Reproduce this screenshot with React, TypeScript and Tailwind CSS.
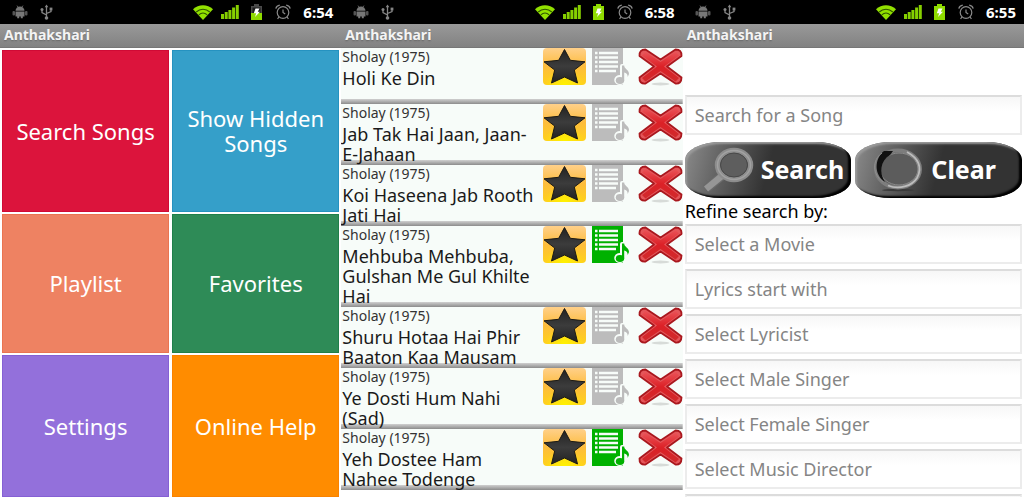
import { useState } from "react";
import type { ReactNode } from "react";

interface Song {
  id: number;
  movie: string;
  title: string;
  inPlaylist: boolean;
}

const tiles = [
  { label: "Search Songs", style: "bg-[#dc143c] border-[#d00a35] h-[162px]" },
  { label: "Show Hidden Songs", style: "bg-[#359fc9] border-[#2592c0] h-[162px]" },
  { label: "Playlist", style: "bg-[#ee8262] border-[#ea7450] h-[139px]" },
  { label: "Favorites", style: "bg-[#2e8b57] border-[#1f7f4a] h-[139px]" },
  { label: "Settings", style: "bg-[#9370db] border-[#8560d4] h-[142px]" },
  { label: "Online Help", style: "bg-[#ff8c00] border-[#fa8200] h-[142px]" },
];

const initialSongs: Song[] = [
  { id: 1, movie: "Sholay (1975)", title: "Holi Ke Din", inPlaylist: false },
  { id: 2, movie: "Sholay (1975)", title: "Jab Tak Hai Jaan, Jaan-E-Jahaan", inPlaylist: false },
  { id: 3, movie: "Sholay (1975)", title: "Koi Haseena Jab Rooth Jati Hai", inPlaylist: false },
  { id: 4, movie: "Sholay (1975)", title: "Mehbuba Mehbuba, Gulshan Me Gul Khilte Hai", inPlaylist: true },
  { id: 5, movie: "Sholay (1975)", title: "Shuru Hotaa Hai Phir Baaton Kaa Mausam", inPlaylist: false },
  { id: 6, movie: "Sholay (1975)", title: "Ye Dosti Hum Nahi (Sad)", inPlaylist: false },
  { id: 7, movie: "Sholay (1975)", title: "Yeh Dostee Ham Nahee Todenge", inPlaylist: true },
];

const filters = [
  "Select a Movie",
  "Lyrics start with",
  "Select Lyricist",
  "Select Male Singer",
  "Select Female Singer",
  "Select Music Director",
];

function AndroidIcon() {
  return (
    <svg width="16" height="14" viewBox="0 0 16 14" fill="#777">
      <path d="M3.500 5.800a4.500 4.300 0 0 1 9 0z" />
      <path d="M5 .6 6.200 2.400M11 .6 9.800 2.400" stroke="#777" strokeWidth=".8" />
      <path d="M3.500 6.500h9v5h-9z" />
      <rect x=".5" y="6" width="2.500" height="4.500" rx="1" fill="#555" />
      <rect x="13" y="6" width="2.500" height="4.500" rx="1" fill="#555" />
      <path d="M5.200 11h2v2.200h-2zM8.800 11h2v2.200h-2z" />
    </svg>
  );
}

function UsbIcon() {
  return (
    <svg width="13" height="16" viewBox="0 0 13 16" fill="#858585" stroke="#858585">
      <path d="M6.500 2v12M6.500 11 2 8.600V6M6.500 9.500 11 7.500V5" fill="none" strokeWidth="1.300" />
      <path d="m6.500 .5 1.800 2.700H4.700z" stroke="none" />
      <circle cx="6.500" cy="14" r="1.800" stroke="none" />
      <circle cx="2" cy="5.600" r="1.500" stroke="none" />
      <path d="M9.600 3.600h2.800v2.800H9.600z" stroke="none" />
    </svg>
  );
}

function WifiIcon() {
  return (
    <svg width="20" height="15" viewBox="0 0 20 15">
      <path d="M10 15 0 4.200C5.500-1 14.500-1 20 4.200z" fill="#92e000" />
      <path
        d="M3.200 7c4-3.600 9.600-3.600 13.600 0M5.800 9.800c2.500-2.200 5.900-2.200 8.400 0"
        fill="none"
        stroke="#2f5200"
        strokeWidth="1.100"
      />
    </svg>
  );
}

function SignalIcon() {
  return (
    <svg width="18" height="14" viewBox="0 0 18 14" fill="#86cf00">
      <path d="M0 9h3v5H0zM3.700 7h3v7h-3zM7.400 5h3v9h-3zM11.100 2.500h3V14h-3zM14.800 0h3v14h-3z" />
    </svg>
  );
}

function BatteryIcon({ low }: { low?: boolean }) {
  return (
    <svg width="13" height="16" viewBox="0 0 13 16">
      <path d="M4 0h5v2h3v14H1V2h3z" fill={low ? "#4a4a4a" : "#8fdb00"} />
      {low && <path d="M2.500 3.500h8V9h-8z" fill="#1d1d1d" />}
      {low && <path d="M1 9h11v7H1z" fill="#8fdb00" />}
      <path d="M5.500 4.500h4L7.800 7.800h2.200L5 13l1.200-3.800H3.800z" fill="#fff" />
    </svg>
  );
}

function AlarmIcon() {
  return (
    <svg width="16" height="16" viewBox="0 0 16 16" fill="none" stroke="#8a8a8a" strokeWidth="1.200">
      <circle cx="8" cy="8.500" r="5.800" />
      <path d="M8 5.500v3l2.200 1.600M.8 4.600C1.300 2.600 2.600 1.500 4.800 1.200M15.200 4.600c-.5-2-1.800-3.100-4-3.400M4 12.800 2.600 15M12 12.800l1.400 2.200" />
    </svg>
  );
}

function StarIcon() {
  return (
    <svg width="43" height="37" viewBox="0 0 43 37">
      <defs>
        <linearGradient id="gold" x1="0" y1="0" x2="0" y2="1">
          <stop offset="0" stopColor="#ffd08a" />
          <stop offset=".5" stopColor="#fdbc3c" />
          <stop offset="1" stopColor="#ffd21a" />
        </linearGradient>
        <radialGradient id="glow" cx=".5" cy="1" r=".45">
          <stop offset="0" stopColor="#fff200" />
          <stop offset="1" stopColor="#fff200" stopOpacity="0" />
        </radialGradient>
        <linearGradient id="coal" x1="0" y1="0" x2="0" y2="1">
          <stop offset="0" stopColor="#222" />
          <stop offset=".5" stopColor="#3c3c3c" />
          <stop offset="1" stopColor="#222" />
        </linearGradient>
      </defs>
      <rect width="43" height="37" rx="4" fill="url(#gold)" />
      <rect width="43" height="37" rx="4" fill="url(#glow)" />
      <path
        d="m21.500 1.500 5.800 10.800 14.700 1.500L31.300 22 34.500 35l-13-6L8.500 35l3.200-13L1 13.800l14.700-1.500z"
        fill="url(#coal)"
        stroke="#1c1a14"
        strokeWidth="1"
        strokeLinejoin="round"
      />
    </svg>
  );
}

function PlaylistIcon({ active }: { active: boolean }) {
  const color = active ? "#00b100" : "#bcbcbc";
  return (
    <svg width="38" height="37" viewBox="0 0 38 37">
      <path d="M0 0h31v37H0z" fill={color} />
      <path
        d="M3 5h2.500M3 9.500h2.500M3 14h2.500M3 18.500h2.500M3 23h2.500M7 5h19M7 9.500h19M7 14h19M7 18.500h19M7 23h17"
        stroke="#f7fcf9"
        strokeWidth="2.600"
      />
      <g fill="#f7fcf9" stroke="#f7fcf9" strokeWidth="4" strokeLinejoin="round">
        <ellipse cx="28" cy="32" rx="3.800" ry="3" />
        <path d="M30 32V18h2c0 3 5 4 5 8l-1.500 3c0-3-1.500-4-3.500-5v8z" />
      </g>
      <g fill={color}>
        <ellipse cx="28" cy="32.500" rx="4.200" ry="3.400" />
        <path d="M30 32V17.500h2.200c0 3.500 4.800 4 4.800 8.500l-1.300 3c0-3-1.500-4-3.500-4.500v8z" />
      </g>
    </svg>
  );
}

function DeleteIcon() {
  return (
    <svg width="45" height="38" viewBox="0 0 45 38">
      <defs>
        <linearGradient id="red" x1="0" y1="0" x2="0" y2="1">
          <stop offset="0" stopColor="#ea5257" />
          <stop offset=".5" stopColor="#dc2127" />
          <stop offset="1" stopColor="#d02a2c" />
        </linearGradient>
      </defs>
      <ellipse cx="22.500" cy="36" rx="9" ry="1.500" fill="#d7dbd8" />
      <path
        d="M7.500 1.500 22.500 11.500 37.500 1.500Q44 1.500 43.500 8L29 18.500l14.500 11Q43.500 36 37.500 35.500L22.500 25.500 7.500 35.500Q1 36 1.500 29.500L16 18.500 1.500 8Q1 1.500 7.500 1.500z"
        fill="#e4565a"
        stroke="#a9181e"
        strokeWidth="1.800"
        strokeLinejoin="round"
      />
      <path
        d="M7.500 4 22.500 14 37.500 4 41 7.500 26 18.500l15 11.500-3.500 3.500-15-10.500-15 10.500L4 30l15-11.500L4 7.500z"
        fill="url(#red)"
      />
    </svg>
  );
}

function MagnifierIcon() {
  return (
    <svg width="54" height="46" viewBox="0 0 54 46" fill="none">
      <path d="M22 28 5 42" stroke="#6a6a6a" strokeWidth="9" />
      <path d="M22 28 5 42" stroke="#969696" strokeWidth="6.500" />
      <ellipse cx="33" cy="18" rx="16.500" ry="14.500" stroke="#8d8d8d" strokeWidth="5.500" />
      <ellipse cx="33" cy="18" rx="16.500" ry="14.500" stroke="#a2a2a2" strokeWidth="1.500" />
      <ellipse cx="33" cy="18" rx="13.500" ry="12" fill="#5e5e5e" stroke="#484848" />
    </svg>
  );
}

function ResetIcon() {
  return (
    <svg width="54" height="44" viewBox="0 0 54 44" fill="none">
      <ellipse cx="27" cy="42" rx="16" ry="1.200" fill="#3a3a3a" />
      <ellipse cx="27" cy="21" rx="22" ry="18.500" fill="#5c5c5c" stroke="#7d7d7d" strokeWidth="4" />
      <ellipse cx="28" cy="21" rx="19" ry="16" stroke="#8a8a8a" />
      <path d="M17 37.500C28 42 41 38 46 30c6-11 1-20-10-26" stroke="#bdbdbd" strokeWidth="1.800" />
      <path d="M13 3h9l-3 4C9 13 8 25 14 34 3 27 3 11 13 3z" fill="#111" />
      <path d="M11 5C1 12 1 26 12 34" stroke="#8f8f8f" />
    </svg>
  );
}

function Screen({ time, low, children }: { time: string; low?: boolean; children: ReactNode }) {
  return (
    <section className="flex min-w-0 flex-col overflow-hidden">
      <div className="flex h-6 shrink-0 items-center bg-black pr-2 pl-3">
        <AndroidIcon />
        <span className="ml-3">
          <UsbIcon />
        </span>
        <div className="ml-auto flex items-center">
          <WifiIcon />
          <span className="ml-2">
            <SignalIcon />
          </span>
          <span className="ml-[11px]">
            <BatteryIcon low={low} />
          </span>
          <span className="ml-3">
            <AlarmIcon />
          </span>
          <span className="ml-3 text-[15px] leading-6 font-bold text-white">{time}</span>
        </div>
      </div>
      <h1 className="h-6 shrink-0 border-b border-[#777] bg-linear-to-b from-[#999] to-[#828282] pl-1 text-sm leading-[22px] font-bold text-[#f4f4f4] text-shadow-sm">
        Anthakshari
      </h1>
      {children}
    </section>
  );
}

function SongRow({ song, onToggle, onRemove }: { song: Song; onToggle: () => void; onRemove: () => void }) {
  return (
    <li className="flex min-h-14 items-start justify-between bg-[#f7fcf9] bg-[linear-gradient(#d0d0d0,#8c8c8c)] bg-[length:100%_5px] bg-bottom bg-no-repeat">
      <div className="w-[198px] pb-px pl-px">
        <p className="text-sm leading-[18px] text-[#333]">{song.movie}</p>
        <p className="mt-0.5 text-lg leading-5 text-[#1a1a1a]">{song.title}</p>
      </div>
      <div className="flex items-start">
        <button aria-label="Favorite">
          <StarIcon />
        </button>
        <button aria-label="Playlist" className="ml-1.5" onClick={onToggle}>
          <PlaylistIcon active={song.inPlaylist} />
        </button>
        <button aria-label="Hide" className="ml-2" onClick={onRemove}>
          <DeleteIcon />
        </button>
      </div>
    </li>
  );
}

function Field({ label }: { label: string }) {
  return (
    <input
      type="text"
      aria-label={label || "More"}
      placeholder={label}
      className="h-10 w-full shrink-0 border-2 border-[#ececec] border-t-[#dcdcdc] bg-linear-to-b from-[#f7f7f7] to-white to-40% px-2 text-lg text-black outline-none placeholder:text-[#858585]"
    />
  );
}

const pill =
  "flex h-14 flex-1 items-center rounded-[36px/18px] bg-linear-105 from-[#8c8c8c] to-[#333] to-50% pl-4 text-[25px] font-bold text-white shadow-[inset_-3px_-2px_2px_#000,inset_2px_2px_2px_#9a9a9a]";

export default function App() {
  const [songs, setSongs] = useState<Song[]>(initialSongs);

  const togglePlaylist = (id: number) => {
    setSongs((prev) => prev.map((s) => (s.id === id ? { ...s, inPlaylist: !s.inPlaylist } : s)));
  };

  const removeSong = (id: number) => {
    setSongs((prev) => prev.filter((s) => s.id !== id));
  };

  return (
    <main className="grid h-screen grid-cols-3 overflow-hidden bg-white font-['Noto_Sans',sans-serif]">
      <Screen time="6:54" low>
        <div className="grid grid-cols-2 gap-x-[3px] gap-y-0.5 p-0.5">
          {tiles.map((tile) => (
            <button
              key={tile.label}
              className={`border px-2 text-[22px] leading-[25px] text-white ${tile.style}`}
            >
              {tile.label}
            </button>
          ))}
        </div>
      </Screen>

      <Screen time="6:58">
        <ul>
          {songs.map((song) => (
            <SongRow
              key={song.id}
              song={song}
              onToggle={() => togglePlaylist(song.id)}
              onRemove={() => removeSong(song.id)}
            />
          ))}
        </ul>
      </Screen>

      <Screen time="6:55">
        <form
          className="mb-[3px] flex min-h-0 flex-1 flex-col overflow-hidden px-0.5 pt-[47px]"
          onSubmit={(e) => e.preventDefault()}
        >
          <Field label="Search for a Song" />
          <div className="mt-[7px] flex shrink-0 gap-1">
            <button type="submit" className={`${pill} gap-1.5`}>
              <MagnifierIcon />
              Search
            </button>
            <button type="reset" className={`${pill} gap-1.5`}>
              <ResetIcon />
              Clear
            </button>
          </div>
          <h2 className="text-lg leading-[26px] text-black">Refine search by:</h2>
          <div className="flex flex-col gap-[5px]">
            {filters.map((label) => (
              <Field key={label} label={label} />
            ))}
            <Field label="" />
          </div>
        </form>
      </Screen>
    </main>
  );
}
